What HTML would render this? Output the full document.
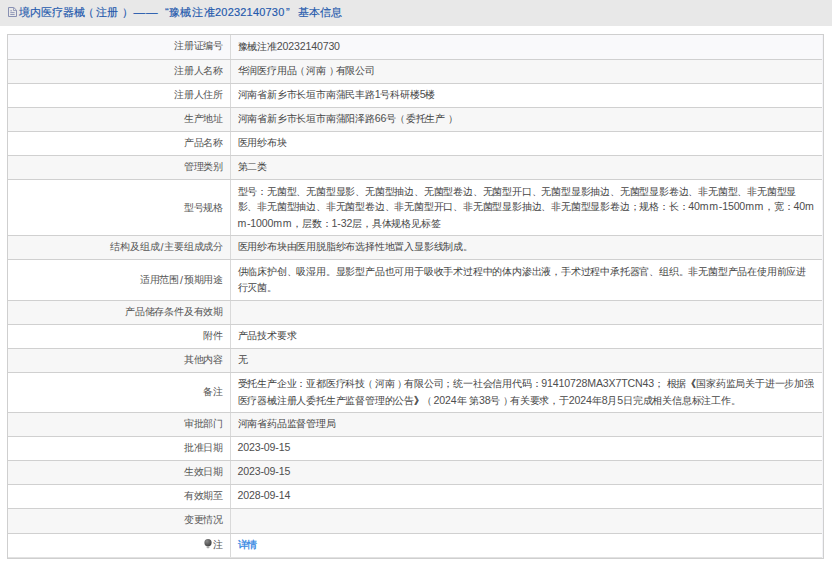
<!DOCTYPE html>
<html><head><meta charset="utf-8">
<style>
html,body{margin:0;padding:0;background:#fff;}
body{width:832px;height:561px;overflow:hidden;position:relative;font-family:"Liberation Sans",sans-serif;font-size:10.4px;letter-spacing:-0.2px;color:#444;font-weight:400;}
i{font-style:normal;font-size:10.6px;letter-spacing:-0.15px;}
.hd{position:absolute;left:0;top:0;width:832px;height:26px;background:#e8e8e8;color:#2459ad;font-size:11px;-webkit-text-stroke:0.15px #2459ad;line-height:24px;letter-spacing:0.2px;}
.hd span{position:absolute;top:0;white-space:nowrap;}
.hd i{font-size:11px;letter-spacing:0.2px;}
.hd svg{position:absolute;left:8px;top:7px;}
.box{position:absolute;left:7px;top:34px;width:815px;height:523px;border:1px solid #cfcfcf;background:#f3f3f7;}
.r{position:absolute;left:0;background:#fff;width:814px;box-sizing:border-box;border-bottom:1px solid #d0d0d0;display:flex;}
.r.g{background:#f7f7f7;}
.r.h{background:#f9f9fb;}
.l{width:223px;box-sizing:border-box;padding-bottom:2px;border-right:1px solid #d9d9d9;padding-right:7px;color:#555;display:flex;align-items:center;justify-content:flex-end;white-space:nowrap;}
.v{flex:1;padding-bottom:2px;box-sizing:border-box;padding-left:6.5px;padding-right:7px;display:flex;align-items:center;line-height:16px;word-break:break-all;}
.v a{color:#2f84e2;text-decoration:none;-webkit-text-stroke:0.3px #2f84e2;}
.bulb{display:block;margin-right:1px;position:relative;top:-0.5px;}
b{font-weight:400;}
b.po{position:relative;left:-1.5px;}
b.pc{position:relative;left:3px;}
p{margin:0;position:relative;white-space:nowrap;}
.sl{padding:0 1px;}
s{text-decoration:none;letter-spacing:0.65px;}
b.ab{-webkit-text-stroke:0.35px #444;}
.v i{color:#4e4e4e;}
</style></head><body>
<div class="hd"><svg width="9" height="10" viewBox="0 0 9 10"><path d="M0.5 0.5H5.8L8.5 3.2V9.5H0.5Z" fill="none" stroke="#8890b2" stroke-width="1"/><path d="M5.5 1V3.5H8" fill="none" stroke="#8890b2" stroke-width="0.8"/><path d="M2.3 3.8H4M2.3 5.6H6.6M2.3 7.5H6.6" stroke="#8890b2" stroke-width="0.9"/></svg><span style="left:18.5px">境内医疗器械</span><span style="left:83px">（</span><span style="left:96px">注册</span><span style="left:121.5px">）</span><span style="left:133.5px;font-size:11.6px;letter-spacing:0.8px">——</span><span style="left:165px">“</span><span style="left:168.5px;letter-spacing:0.8px">豫械注准</span><span style="left:215px"><i>20232140730</i></span><span style="left:286px">”</span><span style="left:297.5px">基本信息</span></div>
<div class="box">
<div class="r h" style="top:0px;height:25px"><div class="l">注册证编号</div><div class="v"><div>豫械注准<i>20232140730</i></div></div></div>
<div class="r g" style="top:25px;height:24px"><div class="l">注册人名称</div><div class="v"><div>华润医疗用品<b class="po">（</b>河南<b class="pc">）</b>有限公司</div></div></div>
<div class="r" style="top:49px;height:24px"><div class="l">注册人住所</div><div class="v"><div>河南省新乡市长垣市南蒲民丰路<i>1</i>号科研楼<i>5</i>楼</div></div></div>
<div class="r g" style="top:73px;height:24px"><div class="l">生产地址</div><div class="v"><div>河南省新乡市长垣市南蒲阳泽路<i>66</i>号<b class="po">（</b>委托生产<b class="pc">）</b></div></div></div>
<div class="r" style="top:97px;height:24px"><div class="l">产品名称</div><div class="v"><div>医用纱布块</div></div></div>
<div class="r g" style="top:121px;height:24px"><div class="l">管理类别</div><div class="v"><div>第二类</div></div></div>
<div class="r" style="top:145px;height:56px"><div class="l" style="padding-bottom:0">型号规格</div><div class="v"><div><p style="top:2px">型号：无菌型、无菌型显影、无菌型抽边、无菌型卷边、无菌型开口、无菌型显影抽边、无菌型显影卷边、非无菌型、非无菌型显</p><p style="top:0.5px">影、非无菌型抽边、非无菌型卷边、非无菌型开口、非无菌型显影抽边、非无菌型显影卷边；规格：长：<i>40<s>m</s><s>m</s>-1500<s>m</s><s>m</s></i>，宽：<i>40<s>m</s></i></p><p style="top:0.5px"><i><s>m</s>-1000<s>m</s><s>m</s></i>，层数：<i>1-32</i>层，具体规格见标签</p></div></div></div>
<div class="r g" style="top:201px;height:24px"><div class="l">结构及组成<i class="sl">/</i>主要组成成分</div><div class="v"><div>医用纱布块由医用脱脂纱布选择性地置入显影线制成。</div></div></div>
<div class="r" style="top:225px;height:41px"><div class="l" style="padding-bottom:0">适用范围<i class="sl">/</i>预期用途</div><div class="v" style="padding-bottom:0"><div>供临床护创、吸湿用。显影型产品也可用于吸收手术过程中的体内渗出液，手术过程中承托器官、组织。非无菌型产品在使用前应进行灭菌。</div></div></div>
<div class="r g" style="top:266px;height:24px"><div class="l">产品储存条件及有效期</div><div class="v"><div></div></div></div>
<div class="r" style="top:290px;height:24px"><div class="l">附件</div><div class="v"><div>产品技术要求</div></div></div>
<div class="r g" style="top:314px;height:24px"><div class="l">其他内容</div><div class="v"><div>无</div></div></div>
<div class="r" style="top:338px;height:40px"><div class="l">备注</div><div class="v"><div>受托生产企业：亚都医疗科技<b class="po">（</b>河南<b class="pc">）</b>有限公司；统一社会信用代码：<i>91410728MA3X7TCN43</i>；<i> </i>根据<b class="ab">《</b>国家药监局关于进一步加强医疗器械注册人委托生产监督管理的公告<b class="ab">》</b><b class="po">（</b><i>2024</i>年<i> </i>第<i>38</i>号<b class="pc">）</b>有关要求，于<i>2024</i>年<i>8</i>月<i>5</i>日完成相关信息标注工作。</div></div></div>
<div class="r g" style="top:378px;height:24px"><div class="l">审批部门</div><div class="v"><div>河南省药品监督管理局</div></div></div>
<div class="r" style="top:402px;height:24px"><div class="l">批准日期</div><div class="v"><div><i>2023-09-15</i></div></div></div>
<div class="r g" style="top:426px;height:24px"><div class="l">生效日期</div><div class="v"><div><i>2023-09-15</i></div></div></div>
<div class="r" style="top:450px;height:24px"><div class="l">有效期至</div><div class="v"><div><i>2028-09-14</i></div></div></div>
<div class="r g" style="top:474px;height:25px"><div class="l">变更情况</div><div class="v"><div></div></div></div>
<div class="r" style="top:499px;height:24px;border-bottom-color:#e2e2e2"><div class="l"><svg class="bulb" width="8" height="10" viewBox="0 0 8 10"><defs><radialGradient id="bg1" cx="0.35" cy="0.3" r="0.7"><stop offset="0" stop-color="#8a8a8a"/><stop offset="1" stop-color="#444"/></radialGradient></defs><circle cx="4" cy="3.7" r="3.6" fill="url(#bg1)"/><rect x="2.6" y="7" width="2.8" height="2.2" rx="0.6" fill="#aaa"/></svg>注</div><div class="v"><div><a>详情</a></div></div></div>
</div>
</body></html>
